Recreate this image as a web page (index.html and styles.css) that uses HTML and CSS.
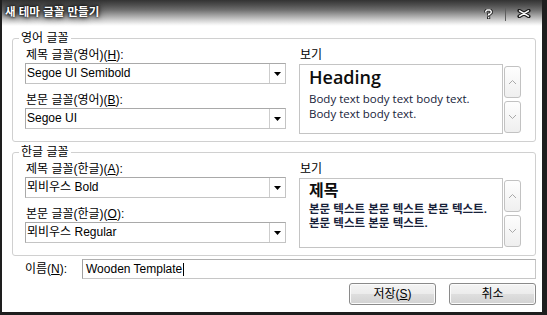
FILE: index.html
```html
<!DOCTYPE html>
<html lang="ko">
<head>
<meta charset="utf-8">
<title>새 테마 글꼴 만들기</title>
<link rel="stylesheet" href="styles.css">
</head>
<body>
<div class="window">
  <div class="titlebar">
    <span class="title">새 테마 글꼴 만들기</span>
    <div class="caption">
      <svg class="help" viewBox="0 0 9 10" width="9" height="10">
        <path d="M1.8 3.4V2.2L3 1h3l1.2 1.2v1.6L5.6 5.2h-1v1.4" fill="none" stroke="#1a1a1a" stroke-width="3" stroke-linejoin="miter"/>
        <rect x="3" y="7.4" width="3.2" height="2.6" fill="#1a1a1a"/>
        <path d="M1.8 3.4V2.2L3 1h3l1.2 1.2v1.6L5.6 5.2h-1v1.4" fill="none" stroke="#fff" stroke-width="1.4" stroke-linejoin="miter"/>
        <rect x="3.9" y="8.1" width="1.5" height="1.3" fill="#fff"/>
      </svg>
      <span class="sep"></span>
      <svg class="close" viewBox="0 0 14 9" width="14" height="9">
        <path d="M2.2 1.6L11.8 7.4M11.8 1.6L2.2 7.4" stroke="#1a1a1a" stroke-width="3.6" stroke-linecap="round"/>
        <path d="M2.6 1.9L11.4 7.1M11.4 1.9L2.6 7.1" stroke="#fff" stroke-width="1.6" stroke-linecap="round"/>
      </svg>
    </div>
  </div>

  <div class="client">
    <fieldset class="group">
      <legend>영어 글꼴</legend>
      <div class="gbody">
        <div class="fields">
          <div class="lbl">제목 글꼴(영어)(<u>H</u>):</div>
          <div class="combo">
            <span class="combo-text">Segoe UI Semibold</span>
            <span class="drop"><svg width="7" height="4" viewBox="0 0 7 4"><path d="M0 0h7L3.5 4z" fill="#000"/></svg></span>
          </div>
          <div class="lbl next">본문 글꼴(영어)(<u>B</u>):</div>
          <div class="combo">
            <span class="combo-text">Segoe UI</span>
            <span class="drop"><svg width="7" height="4" viewBox="0 0 7 4"><path d="M0 0h7L3.5 4z" fill="#000"/></svg></span>
          </div>
        </div>
        <div class="pcol">
          <div class="lbl">보기</div>
          <div class="prow">
            <div class="preview en">
              <div class="ph-en">Heading</div>
              <div class="pb-en">Body text body text body text.<br>Body text body text.</div>
            </div>
            <div class="spin">
              <div class="sbtn"><svg width="9" height="6" viewBox="0 0 9 6"><path d="M1 5L4.5 1.5L8 5" fill="none" stroke="#a9a9a9" stroke-width="1"/></svg></div>
              <div class="sbtn"><svg width="9" height="6" viewBox="0 0 9 6"><path d="M1 1L4.5 4.5L8 1" fill="none" stroke="#a9a9a9" stroke-width="1"/></svg></div>
            </div>
          </div>
        </div>
      </div>
    </fieldset>

    <fieldset class="group">
      <legend>한글 글꼴</legend>
      <div class="gbody">
        <div class="fields">
          <div class="lbl">제목 글꼴(한글)(<u>A</u>):</div>
          <div class="combo">
            <span class="combo-text">뫼비우스 Bold</span>
            <span class="drop"><svg width="7" height="4" viewBox="0 0 7 4"><path d="M0 0h7L3.5 4z" fill="#000"/></svg></span>
          </div>
          <div class="lbl next">본문 글꼴(한글)(<u>O</u>):</div>
          <div class="combo">
            <span class="combo-text">뫼비우스 Regular</span>
            <span class="drop"><svg width="7" height="4" viewBox="0 0 7 4"><path d="M0 0h7L3.5 4z" fill="#000"/></svg></span>
          </div>
        </div>
        <div class="pcol">
          <div class="lbl">보기</div>
          <div class="prow">
            <div class="preview ko">
              <div class="ph-ko">제목</div>
              <div class="pb-ko">본문 텍스트 본문 텍스트 본문 텍스트.<br>본문 텍스트 본문 텍스트.</div>
            </div>
            <div class="spin">
              <div class="sbtn"><svg width="9" height="6" viewBox="0 0 9 6"><path d="M1 5L4.5 1.5L8 5" fill="none" stroke="#a9a9a9" stroke-width="1"/></svg></div>
              <div class="sbtn"><svg width="9" height="6" viewBox="0 0 9 6"><path d="M1 1L4.5 4.5L8 1" fill="none" stroke="#a9a9a9" stroke-width="1"/></svg></div>
            </div>
          </div>
        </div>
      </div>
    </fieldset>

    <div class="namerow">
      <span class="lbl name-lbl">이름(<u>N</u>):</span>
      <div class="textbox"><span>Wooden Template</span><span class="caret"></span></div>
    </div>

    <div class="buttons">
      <div class="btn">저장(<u>S</u>)</div>
      <div class="btn">취소</div>
    </div>
  </div>
</div>
</body>
</html>
```

FILE: styles.css
```css
* { box-sizing: border-box; }
html, body { margin: 0; padding: 0; background: #fff; }
body {
  font-family: "Liberation Sans", "Noto Sans CJK KR", sans-serif;
  font-size: 12px;
  color: #000;
}
u { text-decoration: underline; text-underline-offset: 1px; }

.window {
  width: 547px;
  height: 315px;
  border-left: 2px solid #1e1e1e;
  border-right: 5px solid #1e1e1e;
  border-bottom: 3px solid #1e1e1e;
  background: #fff;
  display: flex;
  flex-direction: column;
  overflow: hidden;
}

.titlebar {
  height: 26px;
  flex: none;
  display: flex;
  align-items: flex-start;
  padding: 5px 0 0 3px;
  background: linear-gradient(to bottom, #333 0px, #4e4e4e 5px, #6f6f6f 10px, #9f9f9f 15px, #cfcfcf 20px, #f2f2f2 24px, #fff 26px);
}
.title {
  color: #fff;
  font-weight: bold;
  font-size: 11.5px;
  line-height: 14px;
  white-space: nowrap;
  text-shadow: 0 0 2px #000, 0 0 4px #000, 0 0 8px #111;
}
.caption {
  margin-left: auto;
  display: flex;
  align-items: flex-start;
  padding-right: 11px;
}
.help { margin-top: 4px; }
.sep {
  width: 1px;
  height: 14px;
  margin: 2px 11px 0 12px;
  background: #5e5e5e;
}
.close { margin-top: 4px; }

.client {
  flex: 1;
  padding: 5px 6px 0 10px;
  display: flex;
  flex-direction: column;
}

.group {
  margin: 0;
  padding: 3px 14px 7px 12px;
  border: 1px solid #d0d0d0;
  border-radius: 3px;
  min-width: 0;
}
.group + .group { margin-top: 3px; }
.group legend {
  padding: 0 2px;
  margin-left: -6px;
  line-height: 14px;
}

.gbody { display: flex; gap: 13px; }
.fields { width: 261px; flex: none; }
.lbl {
  line-height: 14px;
  height: 14px;
  padding-left: 1px;
  white-space: nowrap;
}
.lbl.next { margin-top: 9px; }

.combo {
  margin-top: 1px;
  height: 21px;
  display: flex;
  border: 1px solid #a9a9a9;
  border-right-color: #c4c4c4;
  border-bottom-color: #c4c4c4;
  background: #fff;
}
.combo-text {
  flex: 1;
  padding-left: 1px;
  line-height: 19px;
  white-space: nowrap;
}
.drop {
  width: 16px;
  flex: none;
  border-left: 1px solid #cdcdcd;
  display: flex;
  align-items: center;
  justify-content: center;
}

.pcol { width: 222px; flex: none; }
.prow { display: flex; margin-top: 2px; }
.preview {
  width: 204px;
  height: 70px;
  flex: none;
  border: 1px solid #c4c4c4;
  padding: 1px 4px 0 9px;
  overflow: hidden;
  background: #fff;
}
.preview.ko { padding-top: 0; }
.ph-en {
  font-family: "Open Sans", sans-serif;
  font-weight: 600;
  font-size: 18px;
  line-height: 22px;
  color: #0d0d0d;
}
.pb-en {
  font-family: "Open Sans", sans-serif;
  font-size: 11.5px;
  line-height: 15px;
  margin-top: 3px;
  color: #17233a;
  white-space: nowrap;
}
.ph-ko {
  font-family: "Noto Sans CJK KR", sans-serif;
  font-weight: 700;
  font-size: 16px;
  line-height: 20px;
  color: #0d0d0d;
}
.pb-ko {
  font-family: "Liberation Sans", "Noto Sans CJK KR", sans-serif;
  font-weight: 700;
  font-size: 11.5px;
  line-height: 14px;
  margin-top: 3px;
  color: #18223a;
  white-space: nowrap;
}

.spin {
  margin-left: 1px;
  padding-top: 2px;
  display: flex;
  flex-direction: column;
  gap: 3px;
}
.sbtn {
  width: 17px;
  height: 32px;
  border: 1px solid #c2c2c2;
  border-radius: 3px;
  background: linear-gradient(#fefefe, #efefef);
  display: flex;
  align-items: center;
  justify-content: center;
}

.namerow {
  margin-top: 3px;
  height: 20px;
  display: flex;
  align-items: center;
  padding-left: 13px;
}
.name-lbl { width: 57px; flex: none; padding-left: 0; }
.textbox {
  flex: 1;
  height: 20px;
  border: 1px solid #c6c6c6;
  border-left-color: #a0a0a0;
  border-top-color: #b0b0b0;
  padding-left: 3px;
  display: flex;
  align-items: center;
  white-space: nowrap;
}
.caret {
  width: 1px;
  height: 13px;
  background: #000;
  margin-left: 1px;
}

.buttons {
  margin-top: 4px;
  display: flex;
  justify-content: flex-end;
  gap: 13px;
}
.btn {
  width: 87px;
  height: 22px;
  border: 1px solid #8a8a8a;
  border-radius: 3px;
  background: linear-gradient(#f4f4f4 0%, #ececec 48%, #dedede 52%, #d2d2d2 100%);
  box-shadow: inset 0 0 0 1px #fbfbfb;
  text-align: center;
  line-height: 20px;
  white-space: nowrap;
}
```
